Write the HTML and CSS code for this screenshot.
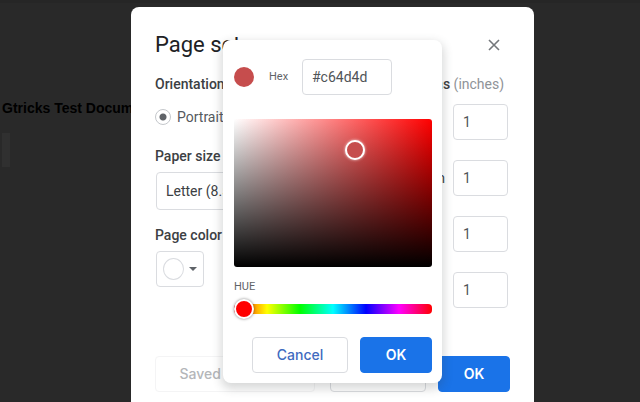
FILE: index.html
```html
<!DOCTYPE html>
<html lang="en">
<head>
    <meta charset="UTF-8">
    <meta name="viewport" content="width=device-width, initial-scale=1.0">
    <title>Page setup</title>
    <link rel="stylesheet" href="styles.css">
</head>
<body>

<!-- Document behind the dialog -->
<main class="document">
    <h1 class="doc-title">Gtricks Test Document</h1>
    <div class="doc-cursor"></div>
</main>

<!-- Page setup dialog -->
<div class="overlay">
    <section class="dialog" role="dialog" aria-labelledby="dialogTitle">
        <header class="dialog-header">
            <h2 id="dialogTitle">Page setup</h2>
            <button class="close" type="button" aria-label="Close">
                <svg width="12" height="12" viewBox="0 0 12 12"><path d="M1 1L11 11M11 1L1 11" stroke="#74777b" stroke-width="1.6" fill="none"/></svg>
            </button>
        </header>

        <div class="columns">
            <div class="settings">
                <h3>Orientation</h3>
                <div class="radios">
                    <label><input type="radio" name="orientation" checked> Portrait</label>
                    <label><input type="radio" name="orientation"> Landscape</label>
                </div>
                <label class="heading" for="paperSize">Paper size</label>
                <select id="paperSize">
                    <option>Letter (8.5" x 11")</option>
                </select>
                <h3>Page color</h3>
                <button class="color-button" type="button" aria-label="Page color">
                    <span class="color-dot"></span>
                    <span class="arrow"></span>
                </button>
            </div>

            <div class="margins">
                <h3>Margins <span>(inches)</span></h3>
                <div class="margin-row">
                    <label for="top">Top</label>
                    <input type="text" id="top" value="1">
                </div>
                <div class="margin-row">
                    <label for="bottom">Bottom</label>
                    <input type="text" id="bottom" value="1">
                </div>
                <div class="margin-row">
                    <label for="left">Left</label>
                    <input type="text" id="left" value="1">
                </div>
                <div class="margin-row">
                    <label for="right">Right</label>
                    <input type="text" id="right" value="1">
                </div>
            </div>
        </div>

        <footer class="dialog-footer">
            <button class="btn saved" type="button" disabled>Saved as default</button>
            <button class="btn" type="button">Cancel</button>
            <button class="btn primary" type="button">OK</button>
        </footer>

        <!-- Custom color picker -->
        <div class="picker">
            <div class="hex-row">
                <span class="swatch"></span>
                <label for="hex">Hex</label>
                <input type="text" id="hex" value="#c64d4d">
            </div>
            <div class="shade">
                <span class="shade-handle"></span>
            </div>
            <label class="hue-label" for="hue">HUE</label>
            <input class="hue" type="range" id="hue" min="0" max="360" value="0">
            <div class="picker-actions">
                <button class="btn" type="button">Cancel</button>
                <button class="btn primary" type="button">OK</button>
            </div>
        </div>
    </section>
</div>

</body>
</html>
```

FILE: styles.css
```css
* {
    box-sizing: border-box;
}

body {
    margin: 0;
    height: 100vh;
    overflow: hidden;
    background-color: #292929;
    font-family: Roboto, Arial, sans-serif;
    font-size: 14px;
    line-height: 16px;
    color: #3c4043;
}

h1, h2, h3 {
    margin: 0;
}

button, input, select {
    font-family: inherit;
    font-size: 14px;
    color: inherit;
}

/* Document */
.document {
    height: 100%;
    padding: 95px 2px 0;
    border-top: 3px solid #262626;
}

.doc-title {
    font-family: "Liberation Sans", Arial, sans-serif;
    font-size: 14px;
    line-height: 20px;
    color: #000;
}

.doc-cursor {
    width: 8px;
    height: 34px;
    margin-top: 15px;
    background-color: #303030;
}

/* Dialog */
.overlay {
    position: fixed;
    inset: 0;
    padding: 7px 106px 0 131px;
}

.dialog {
    position: relative;
    padding: 24px;
    background-color: #fff;
    border-radius: 8px;
}

.dialog-header {
    display: flex;
    justify-content: space-between;
    align-items: center;
}

.dialog-header h2 {
    font-size: 22px;
    font-weight: 400;
    line-height: 28px;
    color: #202124;
}

.close {
    display: flex;
    padding: 10px;
    margin: -10px 0;
    border: none;
    background: none;
}

.columns {
    display: grid;
    grid-template-columns: 1fr 111px;
    margin-top: 17px;
}

h3, .heading {
    display: block;
    font-size: 14px;
    font-weight: 500;
    line-height: 16px;
}

.radios {
    display: flex;
    gap: 24px;
    margin: 16px 0 22px;
    line-height: 18px;
    color: #55595d;
}

.radios label {
    display: flex;
    align-items: center;
    gap: 6px;
}

.radios input {
    appearance: none;
    width: 16px;
    height: 16px;
    margin: 0;
    border: 1px solid #c4c7cb;
    border-radius: 50%;
}

.radios input:checked {
    background: radial-gradient(circle, #5f6368 3px, #fff 4px);
}

select {
    appearance: none;
    width: 220px;
    height: 38px;
    margin: 8px 0 17px 1px;
    padding: 0 9px;
    border: 1px solid #dadce0;
    border-radius: 4px;
    background-color: #fff;
}

.color-button {
    display: flex;
    align-items: center;
    gap: 5px;
    width: 48px;
    height: 36px;
    margin: 8px 0 0 1px;
    padding: 0 6px;
    border: 1px solid #dadce0;
    border-radius: 4px;
    background-color: #fff;
}

.color-dot {
    width: 22px;
    height: 22px;
    border: 1px solid #dadce0;
    border-radius: 50%;
}

.arrow {
    border: 4px solid transparent;
    border-top-color: #5f6368;
    border-bottom: none;
}

/* Margins */
.margins h3 {
    margin-bottom: 12px;
    white-space: nowrap;
}

.margins h3 span {
    font-weight: 400;
    color: #8f9398;
}

.margin-row {
    display: flex;
    align-items: center;
    justify-content: space-between;
    margin: 0 2px 20px 0;
}

.margin-row input {
    width: 55px;
    height: 36px;
    padding: 0 9px;
    border: 1px solid #dadce0;
    border-radius: 4px;
    color: #505458;
}

/* Buttons */
.btn {
    width: 96px;
    height: 36px;
    padding: 0 0 2px;
    border: 1px solid #dadce0;
    border-radius: 4px;
    background-color: #fff;
    font-family: Inter, Roboto, sans-serif;
    font-weight: 500;
    color: #3f6bc0;
}

.primary {
    width: 72px;
    border-color: #1a73e8;
    background-color: #1a73e8;
    font-weight: 600;
    color: #fff;
}

.saved {
    width: 160px;
    margin-right: auto;
    border-color: #f4f4f5;
    color: #b4b6b9;
}

.dialog-footer {
    display: flex;
    gap: 12px;
    margin-top: 28px;
}

/* Color picker */
.picker {
    position: absolute;
    top: 33px;
    left: 92px;
    width: 219px;
    padding: 19px 10px 10px 11px;
    border-radius: 8px;
    background-color: #fff;
    box-shadow: 0 4px 10px 2px rgba(60, 64, 67, 0.2);
}

.hex-row {
    display: flex;
    align-items: center;
}

.swatch {
    width: 20px;
    height: 20px;
    border-radius: 50%;
    background-color: #c64d4d;
}

.hex-row label {
    width: 48px;
    padding-left: 15px;
    font-size: 11px;
    color: #5f6368;
}

.hex-row input {
    width: 90px;
    height: 36px;
    padding: 0 9px;
    border: 1px solid #dadce0;
    border-radius: 4px;
    color: #505458;
}

.shade {
    position: relative;
    height: 148px;
    margin-top: 24px;
    border-radius: 3px;
    background: linear-gradient(to top, #000, transparent), linear-gradient(to right, #fff, #f00);
}

.shade-handle {
    position: absolute;
    top: 21%;
    left: 61%;
    width: 20px;
    height: 20px;
    border: 2px solid #fff;
    border-radius: 50%;
    background-color: #c64d4d;
    box-shadow: 0 0 3px rgba(255, 255, 255, 0.8);
    transform: translate(-50%, -50%);
}

.hue-label {
    display: block;
    margin-top: 12px;
    font-size: 11px;
    color: #5f6368;
}

.hue {
    appearance: none;
    display: block;
    width: 100%;
    height: 10px;
    margin: 9px 0 23px;
    border-radius: 4px;
    background: linear-gradient(to right, #f00, #ff0, #0f0, #0ff, #00f, #f0f, #f00);
}

.hue::-webkit-slider-thumb {
    appearance: none;
    width: 20px;
    height: 20px;
    border: 2px solid #fff;
    border-radius: 50%;
    background-color: #f00;
    box-shadow: 0 0 3px rgba(0, 0, 0, 0.5);
}

.picker-actions {
    display: flex;
    justify-content: flex-end;
    gap: 12px;
}
```
